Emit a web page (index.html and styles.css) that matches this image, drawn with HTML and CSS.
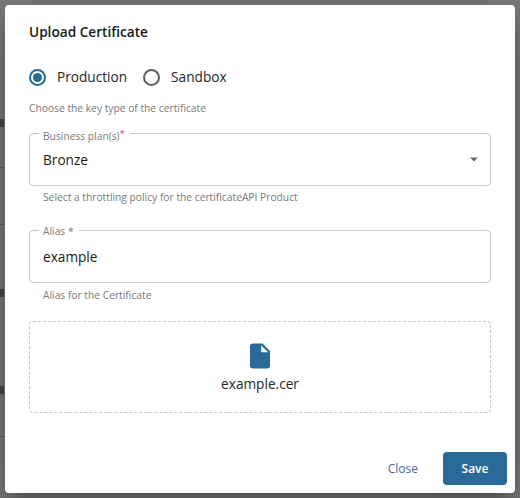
FILE: index.html
```html
<!DOCTYPE html>
<html lang="en">

<head>
    <meta charset="UTF-8">
    <meta name="viewport" content="width=device-width, initial-scale=1.0">
    <title>Upload Certificate</title>
    <link rel="stylesheet" href="styles.css">
</head>

<body>
    <!-- bits of the page behind the overlay -->
    <span class="behind behind-1"></span>
    <span class="behind behind-2"></span>
    <span class="behind behind-3"></span>
    <span class="behind-line behind-line-1"></span>
    <span class="behind-line behind-line-2"></span>
    <span class="behind-line behind-line-3"></span>

    <div class="dialog">
        <h2 class="dialog-title">Upload Certificate</h2>

        <div class="radio-group">
            <label class="radio-item">
                <span class="radio-circle checked"></span>
                Production
            </label>
            <label class="radio-item">
                <span class="radio-circle"></span>
                Sandbox
            </label>
        </div>
        <p class="group-help">Choose the key type of the certificate</p>

        <div class="field field-plan">
            <span class="field-label">Business plan(s)<span class="required">*</span></span>
            <span class="field-value">Bronze</span>
            <svg class="select-arrow" width="24" height="24" viewBox="0 0 24 24">
                <path d="M8 10.500l4 4 4-4z"></path>
            </svg>
        </div>
        <p class="field-help">Select a throttling policy for the certificateAPI Product</p>

        <div class="field field-alias">
            <span class="field-label">Alias *</span>
            <span class="field-value">example</span>
        </div>
        <p class="field-help field-help-alias">Alias for the Certificate</p>

        <div class="dropzone">
            <svg class="file-icon" width="30" height="30" viewBox="0 0 24 24">
                <path d="M6 2c-1.100 0-2 .9-2 2v16c0 1.100.9 2 2 2h12c1.100 0 2-.9 2-2V8l-6-6H6z"></path>
                <path class="file-fold" d="M13 3.500V9h5.500z"></path>
            </svg>
            <span class="file-name">example.cer</span>
        </div>

        <div class="dialog-actions">
            <button type="button" class="btn-close">Close</button>
            <button type="button" class="btn-save">Save</button>
        </div>
    </div>
</body>

</html>
```

FILE: styles.css
```css
* {
    box-sizing: border-box;
}

body {
    position: relative;
    margin: 0;
    height: 498px;
    padding: 5px;
    overflow: hidden;
    background-color: #7a7a7a;
    font-family: "Open Sans", Arial, sans-serif;
    color: #1a1a1a;
}

.behind {
    position: absolute;
    left: 0;
    width: 4px;
    height: 8px;
    background-color: #484848;
}

.behind-1 {
    top: 119px;
}

.behind-2 {
    top: 289px;
}

.behind-3 {
    top: 386px;
}

.behind-line {
    position: absolute;
    left: 0;
    width: 5px;
    height: 1px;
    background-color: #5c5c5c;
}

.behind-line-1 {
    top: 167px;
}

.behind-line-2 {
    top: 224px;
}

.behind-line-3 {
    top: 436px;
}

.dialog {
    position: relative;
    height: 488px;
    padding: 0 24px;
    background-color: #fff;
    border-radius: 4px;
    box-shadow: 0 11px 15px -7px rgba(0, 0, 0, 0.2), 0 24px 38px 3px rgba(0, 0, 0, 0.14), 0 9px 46px 8px rgba(0, 0, 0, 0.12);
    display: flex;
    flex-direction: column;
}

.dialog-title {
    margin: 17px 0 0;
    font-size: 13.650px;
    line-height: 20px;
    font-weight: 600;
    color: #1a1a1a;
}

.radio-group {
    display: flex;
    gap: 16px;
    margin-top: 25px;
}

.radio-item {
    display: flex;
    align-items: center;
    gap: 11px;
    font-size: 13.650px;
    line-height: 20px;
    color: #262626;
}

.radio-circle {
    width: 17px;
    height: 17px;
    border: 2px solid #5f5f5f;
    border-radius: 50%;
    display: flex;
    align-items: center;
    justify-content: center;
}

.radio-circle.checked {
    border-color: #256a99;
}

.radio-circle.checked::after {
    content: "";
    width: 9px;
    height: 9px;
    border-radius: 50%;
    background-color: #256a99;
}

.group-help {
    margin: 13px 0 0;
    font-size: 10.250px;
    line-height: 16px;
    color: #7a7a7a;
}

.field {
    position: relative;
    height: 53px;
    padding: 0 13px;
    border: 1px solid #c8c8c8;
    border-radius: 4px;
    display: flex;
    align-items: center;
}

.field-plan {
    margin-top: 17px;
}

.field-alias {
    margin-top: 25px;
}

.field-label {
    position: absolute;
    left: 9px;
    top: -7px;
    padding: 0 5px 0 4px;
    background-color: #fff;
    font-size: 10.250px;
    line-height: 14px;
    color: #7a7a7a;
}

.required {
    color: #e53935;
    vertical-align: 3px;
    font-size: 9px;
}

.field-value {
    font-size: 13.650px;
    line-height: 20px;
    color: #1a1a1a;
}

.select-arrow {
    position: absolute;
    right: 4px;
    top: 13px;
    fill: #666;
}

.field-help {
    margin: 3px 0 0 14px;
    font-size: 10.250px;
    line-height: 16px;
    color: #7a7a7a;
}

.field-help-alias {
    margin-top: 4px;
}

.dropzone {
    margin-top: 18px;
    height: 92px;
    border: 1px dashed #c8c8c8;
    border-radius: 4px;
    display: flex;
    flex-direction: column;
    align-items: center;
    justify-content: center;
}

.file-icon {
    fill: #2a6a99;
}

.file-fold {
    fill: #fff;
}

.file-name {
    margin-top: 3px;
    font-size: 13.650px;
    line-height: 20px;
    color: #262626;
}

.dialog-actions {
    margin-top: auto;
    margin-bottom: 8px;
    margin-right: -16px;
    display: flex;
    justify-content: flex-end;
    align-items: center;
    gap: 13px;
}

.btn-close,
.btn-save {
    height: 33px;
    border: none;
    border-radius: 4px;
    font-family: inherit;
    font-size: 12px;
}

.btn-close {
    padding: 0 12px;
    background: none;
    color: #3b6f96;
}

.btn-save {
    width: 64px;
    background-color: #2a6a99;
    color: #fff;
    font-weight: 600;
}
```
